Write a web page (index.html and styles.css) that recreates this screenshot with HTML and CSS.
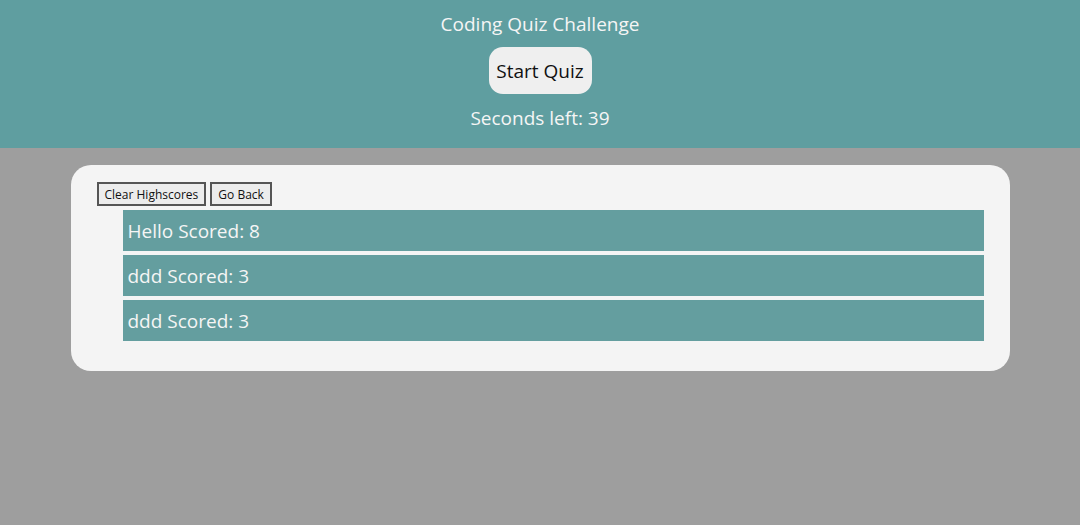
FILE: index.html
```html
<!DOCTYPE html>
<html lang="en">
<head>
<meta charset="utf-8">
<title>Coding Quiz Challenge</title>
<link rel="stylesheet" href="styles.css">
</head>
<body>
<header class="top">
  <h1 class="title">Coding Quiz Challenge</h1>
  <button class="start">Start Quiz</button>
  <p class="timer">Seconds left: 39</p>
</header>
<main class="card">
  <div class="actions">
    <button class="small-btn">Clear Highscores</button>
    <button class="small-btn">Go Back</button>
  </div>
  <ul class="scores">
    <li class="score">Hello Scored: 8</li>
    <li class="score">ddd Scored: 3</li>
    <li class="score">ddd Scored: 3</li>
  </ul>
</main>
</body>
</html>
```

FILE: styles.css
```css
* { box-sizing: border-box; }
html, body { margin: 0; padding: 0; }
body {
  background: #9e9e9e;
  font-family: "Open Sans", "Noto Sans", sans-serif;
  height: 525px;
}
.top {
  background: #5f9ea0;
  height: 148px;
  display: flex;
  flex-direction: column;
  align-items: center;
  color: #f5f5f5;
}
.title {
  margin: 10px 0 0;
  font-size: 19px;
  font-weight: 400;
  line-height: 28px;
}
.start {
  margin-top: 9px;
  width: 103px;
  height: 47px;
  border: none;
  border-radius: 14px;
  background: #efefef;
  color: #111;
  font-family: inherit;
  font-size: 19px;
  padding: 0;
}
.timer {
  margin: 10px 0 0;
  font-size: 19px;
  line-height: 28px;
}
.card {
  width: 939px;
  margin: 17px auto 0;
  background: #f4f4f4;
  border-radius: 20px;
  padding: 17px 26px 30px;
}
.actions {
  display: flex;
  gap: 4px;
}
.small-btn {
  height: 24px;
  border: 2px solid #555;
  background: #ececec;
  font-family: inherit;
  font-size: 12px;
  padding: 0 6px;
  color: #111;
}
.scores {
  list-style: none;
  margin: 4px 0 0;
  padding: 0 0 0 26px;
  display: flex;
  flex-direction: column;
  gap: 4px;
}
.score {
  background: #649e9f;
  height: 41px;
  display: flex;
  align-items: center;
  padding-left: 5px;
  color: #f5f5f5;
  font-size: 19px;
}
```
